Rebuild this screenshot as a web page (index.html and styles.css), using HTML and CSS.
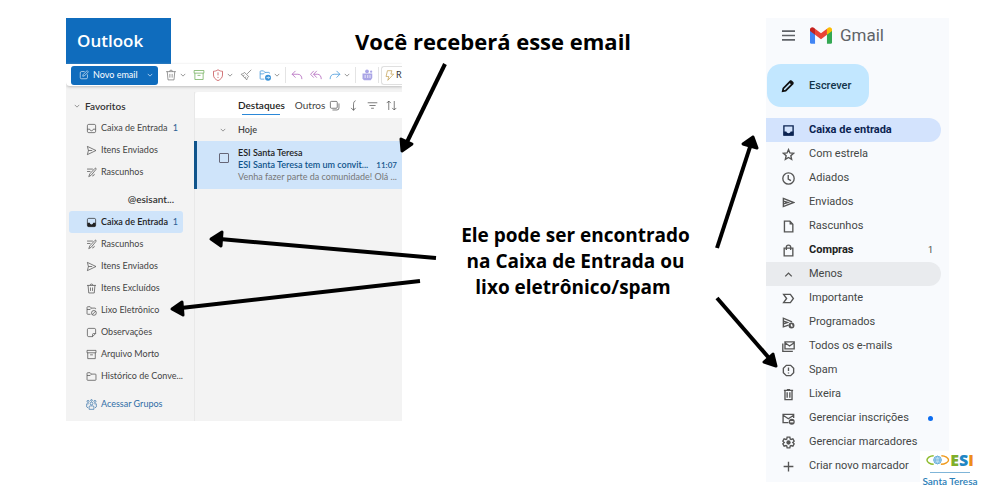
FILE: index.html
```html
<!DOCTYPE html>
<html lang="pt-BR">

<head>
    <title>Santa Teresa - convite por email</title>
    <meta charset="utf-8" />
    <link rel="stylesheet" href="styles.css">
</head>

<body>
    <svg class="sprite" aria-hidden="true">
        <symbol id="chev" viewBox="0 0 16 16"><path d="M2 5l6 6 6-6" /></symbol>
        <symbol id="compose" viewBox="0 0 16 16"><path d="M9 2.500H4A2 2 0 0 0 2 4.500V12a2 2 0 0 0 2 2h7.500a2 2 0 0 0 2-2V7M6 10l.5-2.500L13 1l2 2-6.500 6.500z" /></symbol>
        <symbol id="trash" viewBox="0 0 16 16"><path d="M1.500 3.500h13M6 3.500a2 2 0 0 1 4 0M3 3.500l1 11h8l1-11M6.500 6.500v5M9.500 6.500v5" /></symbol>
        <symbol id="archive" viewBox="0 0 16 16"><path d="M1.500 2h13v3.500h-13zM2.500 5.500V14h11V5.500M6 8.500h4" /></symbol>
        <symbol id="shield" viewBox="0 0 16 16"><path d="M8 1c2 1.500 4 2 6 2v5c0 3.500-2.500 6-6 7.500C4.500 14 2 11.500 2 8V3c2 0 4-.5 6-2zM8 4.500v4M8 10.500v1.500" /></symbol>
        <symbol id="broom" viewBox="0 0 16 16"><path d="M15 1L9.500 6.500M6 4.500l5.500 5.500M6 4.500C5 6 3.500 6.500 1.500 7L9 14.500c.5-2 1-3.500 2.500-4.500M4 9.500L6 8M6.500 12L8 10" /></symbol>
        <symbol id="move" viewBox="0 0 16 16"><path d="M7 13.500H2.500a1 1 0 0 1-1-1v-9a1 1 0 0 1 1-1H6L8 4.500h5a1 1 0 0 1 1 1V6M1.500 6.500H6l2-2" /><circle class="solid" cx="12" cy="11.500" r="4" /><path class="knock" d="M10 11.500h4M12.500 10l1.500 1.500-1.500 1.500" /></symbol>
        <symbol id="reply" viewBox="0 0 16 16"><path d="M6 2.500L1.500 7 6 11.500M1.500 7H9c3.500 0 5.500 2.500 5.500 6.500" /></symbol>
        <symbol id="replyall" viewBox="0 0 16 16"><path d="M5 2.500L.8 7 5 11.500M9 2.500L4.800 7 9 11.500M4.800 7H10c3 0 5 2.500 5 6.500" /></symbol>
        <symbol id="forward" viewBox="0 0 16 16"><path d="M10 2.500L14.500 7 10 11.500M14.500 7H7c-3.500 0-5.500 2.500-5.500 6.500" /></symbol>
        <symbol id="teams" viewBox="0 0 16 16"><circle class="solid" cx="8" cy="3" r="2.500" /><circle class="solid" cx="13.500" cy="3.500" r="1.500" /><path class="solid" d="M2 6h13v6l-2 3H4l-2-2z" /><path class="knock" d="M5.500 8v4M9 8v4M12 8v4" /></symbol>
        <symbol id="bolt" viewBox="0 0 16 16"><path d="M5 1h6.500L10 6h4L5.500 15 7 9.500H3z" /></symbol>
        <symbol id="tray" viewBox="0 0 16 16"><path d="M2 4a2 2 0 0 1 2-2h8a2 2 0 0 1 2 2v8a2 2 0 0 1-2 2H4a2 2 0 0 1-2-2zM2 9h3.500c.5 3 4.500 3 5 0H14" /></symbol>
        <symbol id="trayfull" viewBox="0 0 16 16"><path d="M2 4a2 2 0 0 1 2-2h8a2 2 0 0 1 2 2v8a2 2 0 0 1-2 2H4a2 2 0 0 1-2-2z" /><path class="solid" d="M2 8.500h3.500c.5 3 4.500 3 5 0H14V13l-1 1H3l-1-1z" /></symbol>
        <symbol id="send" viewBox="0 0 16 16"><path d="M2 2l12.500 6L2 14l1.500-6zM3.500 8H9" /></symbol>
        <symbol id="draft" viewBox="0 0 16 16"><path d="M1.500 3H10M1.500 6.500h5M4 14l1.500-4L13 2c1-1 2.500.5 1.500 1.500L7.500 12zM9 13c2 0 3-1 3-3" /></symbol>
        <symbol id="junk" viewBox="0 0 16 16"><path d="M6.500 13.500h-4a1 1 0 0 1-1-1v-9a1 1 0 0 1 1-1H6L8 4.500h5a1 1 0 0 1 1 1V6M1.500 6.500H6l2-2" /><circle cx="11.500" cy="11.500" r="3.500" /><path d="M9 14l5-5" /></symbol>
        <symbol id="note" viewBox="0 0 16 16"><path d="M4 2h8a2 2 0 0 1 2 2v5.500L9.500 14H4a2 2 0 0 1-2-2V4a2 2 0 0 1 2-2zM14 9.500h-3a1.500 1.500 0 0 0-1.500 1.500v3" /></symbol>
        <symbol id="folder" viewBox="0 0 16 16"><path d="M2.500 13.500a1 1 0 0 1-1-1v-9a1 1 0 0 1 1-1H6L8 4.500h5.500a1 1 0 0 1 1 1v7a1 1 0 0 1-1 1zM1.500 6.500H6l2-2" /></symbol>
        <symbol id="groups" viewBox="0 0 16 16"><circle cx="8" cy="6.500" r="2" /><circle cx="3" cy="3.500" r="1.500" /><circle cx="8" cy="2" r="1.200" /><circle cx="13" cy="3.500" r="1.500" /><path d="M4.500 15v-3.500a1.500 1.500 0 0 1 1.500-1.500h4a1.500 1.500 0 0 1 1.500 1.500V15zM4 7H1v4.500l2 1.500M12 7h3v4.500L13 13" /></symbol>
        <symbol id="copies" viewBox="0 0 16 16"><path d="M2 3.500A1.500 1.500 0 0 1 3.500 2h7A1.500 1.500 0 0 1 12 3.500v7a1.500 1.500 0 0 1-1.500 1.500h-7A1.500 1.500 0 0 1 2 10.500zM5 14.500h6.500a3 3 0 0 0 3-3V5" /></symbol>
        <symbol id="jump" viewBox="0 0 16 16"><path d="M11 1C8.500 2 8 4 8 7v8M4.500 11.500L8 15l3-3.500" /></symbol>
        <symbol id="filter" viewBox="0 0 16 16"><path d="M1 4h14M3.500 8h9M6 12h4" /></symbol>
        <symbol id="sort" viewBox="0 0 16 16"><path d="M4 14.500v-13M1 4.500l3-3 3 3M12 1.500v13M9 11.500l3 3 3-3" /></symbol>

        <symbol id="menu" viewBox="0 0 24 24"><path d="M0 4h24M0 12h24M0 20h24" /></symbol>
        <symbol id="pencil" viewBox="0 0 24 24"><path d="M3 21l1-5L16 4l4 4L8 20z" /><path class="solid" d="M14 6l4-4 4 4-4 4z" /></symbol>
        <symbol id="g-inbox" viewBox="0 0 24 24"><path d="M3.500 3.500h17v17h-17z" /><path class="solid" d="M3 14h5c1 4 7 4 8 0h5v7H3z" /></symbol>
        <symbol id="g-star" viewBox="0 0 24 24"><path d="M12 3l2.600 6.200 6.700.6-5 4.500 1.500 6.700-5.800-3.600L6.200 21l1.500-6.700-5-4.500 6.700-.6z" /></symbol>
        <symbol id="g-clock" viewBox="0 0 24 24"><circle cx="12" cy="12" r="10.500" /><path d="M11.500 5.500V13l5 3" /></symbol>
        <symbol id="g-send" viewBox="0 0 24 24"><path d="M2.500 4.500L21.500 12 2.500 19.500zM3 9.500l8 2.500-8 2.500" /></symbol>
        <symbol id="g-file" viewBox="0 0 24 24"><path d="M4.500 2h10l5.500 6v14H4.500z" /><path class="solid" d="M14 2v6.500h6z" /></symbol>
        <symbol id="g-bag" viewBox="0 0 24 24"><path d="M4 7.500h16V22H4zM8 11V6a4 4 0 0 1 8 0v5" /></symbol>
        <symbol id="g-up" viewBox="0 0 24 24"><path d="M6 15.500l6-6 6 6" /></symbol>
        <symbol id="g-label" viewBox="0 0 24 24"><path d="M3 4.500h12.500L21 12l-5.500 7.500H3L8.500 12z" /></symbol>
        <symbol id="g-timed" viewBox="0 0 24 24"><path d="M12 17L2.500 20V4l16 7M3 9.500l7 2.500-7 2.500" /><circle class="solid" cx="17.500" cy="17.500" r="5.500" /><path class="knock" d="M17.500 15v3l2 1" /></symbol>
        <symbol id="g-mails" viewBox="0 0 24 24"><path d="M5.500 3.500h17v13h-17zM5.500 5l8.500 6 8.500-6M1.500 6.500v14.500H20" /></symbol>
        <symbol id="g-spam" viewBox="0 0 24 24"><path d="M8 2.500h8L21.500 8v8L16 21.500H8L2.500 16V8zM12 6.500V13M12 15.500v2" /></symbol>
        <symbol id="g-trash" viewBox="0 0 24 24"><path d="M3.500 4.500h17M9 3h6M5.500 5v16.500h13V5M9.500 8v10M14.500 8v10" /></symbol>
        <symbol id="g-unsub" viewBox="0 0 24 24"><path d="M12 19.500H2v-15h19.500V11M2 6l9.700 6.500L21.500 6" /><circle class="solid" cx="18" cy="18" r="5.500" /><path class="knock" d="M15 18h6" /></symbol>
        <symbol id="g-gear" viewBox="0 0 24 24"><path d="M9.500 2h5l.7 3.500 1.500.9 3.400-1.200 2.400 4.300-2.700 2.500 2.700 2.500-2.400 4.300-3.400-1.200-1.500.9-.7 3.500h-5l-.7-3.500-1.500-.9-3.400 1.200-2.400-4.300L4.200 12 1.500 9.500l2.400-4.300 3.400 1.200 1.500-.9z" /><circle class="solid" cx="12" cy="12" r="4" /></symbol>
        <symbol id="g-plus" viewBox="0 0 24 24"><path d="M12 3v18M3 12h18" /></symbol>
    </svg>

    <main class="guide">
        <section class="outlook">
            <header class="brand">Outlook</header>

            <div class="toolbar">
                <button class="new"><svg><use href="#compose" /></svg>Novo email<svg class="chev"><use href="#chev" /></svg></button>
                <button aria-label="Excluir"><svg><use href="#trash" /></svg><svg class="chev"><use href="#chev" /></svg></button>
                <button class="green" aria-label="Arquivar"><svg><use href="#archive" /></svg></button>
                <button class="red" aria-label="Denunciar"><svg><use href="#shield" /></svg><svg class="chev"><use href="#chev" /></svg></button>
                <button aria-label="Limpar"><svg><use href="#broom" /></svg></button>
                <button class="blue" aria-label="Mover"><svg><use href="#move" /></svg><svg class="chev"><use href="#chev" /></svg></button>
                <span class="sep"></span>
                <button class="purple" aria-label="Responder"><svg><use href="#reply" /></svg></button>
                <button class="purple" aria-label="Responder a todos"><svg><use href="#replyall" /></svg></button>
                <button class="blue" aria-label="Encaminhar"><svg><use href="#forward" /></svg><svg class="chev"><use href="#chev" /></svg></button>
                <span class="sep"></span>
                <button class="lilac" aria-label="Teams"><svg><use href="#teams" /></svg></button>
                <span class="sep"></span>
                <button class="quick"><svg><use href="#bolt" /></svg>R</button>
            </div>

            <div class="panes">
                <nav class="folders">
                    <h2><svg class="chev"><use href="#chev" /></svg>Favoritos</h2>
                    <ul>
                        <li><a href="#"><svg><use href="#tray" /></svg>Caixa de Entrada<b>1</b></a></li>
                        <li><a href="#"><svg><use href="#send" /></svg>Itens Enviados</a></li>
                        <li><a href="#"><svg><use href="#draft" /></svg>Rascunhos</a></li>
                    </ul>
                    <h2 class="account">@esisant...</h2>
                    <ul>
                        <li><a href="#" class="current"><svg><use href="#trayfull" /></svg>Caixa de Entrada<b>1</b></a></li>
                        <li><a href="#"><svg><use href="#draft" /></svg>Rascunhos</a></li>
                        <li><a href="#"><svg><use href="#send" /></svg>Itens Enviados</a></li>
                        <li><a href="#"><svg><use href="#trash" /></svg>Itens Excluídos</a></li>
                        <li><a href="#"><svg><use href="#junk" /></svg>Lixo Eletrônico</a></li>
                        <li><a href="#"><svg><use href="#note" /></svg>Observações</a></li>
                        <li><a href="#"><svg><use href="#archive" /></svg>Arquivo Morto</a></li>
                        <li><a href="#"><svg><use href="#folder" /></svg>Histórico de Conve...</a></li>
                    </ul>
                    <a href="#" class="groups"><svg><use href="#groups" /></svg>Acessar Grupos</a>
                </nav>

                <div class="messages">
                    <div class="tabs">
                        <a href="#" class="active">Destaques</a>
                        <a href="#">Outros</a>
                        <div class="tools">
                            <button aria-label="Selecionar"><svg><use href="#copies" /></svg></button>
                            <button aria-label="Ir para"><svg><use href="#jump" /></svg></button>
                            <button aria-label="Filtrar"><svg><use href="#filter" /></svg></button>
                            <button aria-label="Classificar"><svg><use href="#sort" /></svg></button>
                        </div>
                    </div>
                    <h3><svg class="chev"><use href="#chev" /></svg>Hoje</h3>
                    <article class="message">
                        <input type="checkbox" aria-label="Selecionar mensagem">
                        <div class="summary">
                            <div class="from">ESI Santa Teresa</div>
                            <div class="subject"><span>ESI Santa Teresa tem um convit...</span><time>11:07</time></div>
                            <div class="preview">Venha fazer parte da comunidade! Olá ...</div>
                        </div>
                    </article>
                </div>
            </div>
        </section>

        <h1>Você receberá esse email</h1>
        <p class="where">Ele pode ser encontrado<br>na Caixa de Entrada ou<br>lixo eletrônico/spam&nbsp;</p>

        <section class="gmail">
            <header>
                <button aria-label="Menu"><svg class="burger"><use href="#menu" /></svg></button>
                <svg class="logo" viewBox="0 0 24 18">
                    <path fill="#4285f4" d="M0 3v13.500A1.500 1.500 0 0 0 1.500 18H5.500V7z" />
                    <path fill="#34a853" d="M24 3v13.500a1.500 1.500 0 0 1-1.500 1.500H18.500V7z" />
                    <path fill="#ea4335" d="M5.500 1.500L12 6.500l6.500-5v6.700L12 13.200 5.500 8.200z" />
                    <path fill="#c5221f" d="M0 4V2.500C0 .3 2.500-.8 4.300.6l1.200.9v6.700z" />
                    <path fill="#fbbc04" d="M24 4V2.500C24 .3 21.500-.8 19.700.6l-1.200.9v6.700z" />
                </svg>
                <span>Gmail</span>
            </header>
            <button class="write"><svg><use href="#pencil" /></svg>Escrever</button>
            <nav>
                <a href="#" class="current"><svg><use href="#g-inbox" /></svg>Caixa de entrada</a>
                <a href="#"><svg><use href="#g-star" /></svg>Com estrela</a>
                <a href="#"><svg><use href="#g-clock" /></svg>Adiados</a>
                <a href="#"><svg><use href="#g-send" /></svg>Enviados</a>
                <a href="#"><svg><use href="#g-file" /></svg>Rascunhos</a>
                <a href="#" class="unread"><svg><use href="#g-bag" /></svg>Compras<span>1</span></a>
                <a href="#" class="less"><svg><use href="#g-up" /></svg>Menos</a>
                <a href="#"><svg><use href="#g-label" /></svg>Importante</a>
                <a href="#"><svg><use href="#g-timed" /></svg>Programados</a>
                <a href="#"><svg><use href="#g-mails" /></svg>Todos os e-mails</a>
                <a href="#"><svg><use href="#g-spam" /></svg>Spam</a>
                <a href="#"><svg><use href="#g-trash" /></svg>Lixeira</a>
                <a href="#"><svg><use href="#g-unsub" /></svg>Gerenciar inscrições<i class="dot"></i></a>
                <a href="#"><svg><use href="#g-gear" /></svg>Gerenciar marcadores</a>
                <a href="#"><svg><use href="#g-plus" /></svg>Criar novo marcador</a>
            </nav>
            <div class="esi">
                <div class="mark">
                    <svg viewBox="0 0 25 12">
                        <path fill="none" stroke="#8dbb2c" stroke-width="1.500" d="M8 1.500C4 1.500 1 4 1 6s3 4.500 7 4.500" />
                        <path fill="none" stroke="#ef9a1d" stroke-width="1.500" d="M16 1.500c4 0 7.500 2.500 7.500 4.500s-3.500 4.500-8 4.500" />
                        <circle cx="12" cy="6" r="4" fill="#b9dcf0" stroke="#69afdb" />
                        <path fill="none" stroke="#69afdb" stroke-width=".7" d="M8 6h8M12 2c-3 2-3 6 0 8M12 2c3 2 3 6 0 8" />
                    </svg>
                    <b class="e">E</b><b class="s">S</b><b class="i">I</b>
                </div>
                <div class="name">Santa Teresa</div>
            </div>
        </section>
    </main>

    <!-- arrows from the notes to the mailboxes -->
    <svg class="arrows" viewBox="0 0 1000 500" aria-hidden="true">
        <path d="M445 64L407 142" />
        <path d="M436 258L220 239" />
        <path d="M420 281L181 308" />
        <path d="M717 248L750 147" />
        <path d="M717 298L769 358" />
        <path class="head" d="M402 151l-1-12 11 5z" />
        <path class="head" d="M211 239l11-7-1 14z" />
        <path class="head" d="M172 309l10-7 1 13z" />
        <path class="head" d="M753 137l-10 7 14 4z" />
        <path class="head" d="M776 366l-12-4 9-8z" />
    </svg>
</body>

</html>
```

FILE: styles.css
```css
* {
    box-sizing: border-box;
}

body {
    margin: 0;
    position: relative;
    background: #fff;
    font-family: "Open Sans", "Noto Sans", sans-serif;
}

h1, h2, h3, p, ul {
    margin: 0;
    padding: 0;
    list-style: none;
}

a {
    color: inherit;
    text-decoration: none;
}

button {
    border: 0;
    padding: 0;
    background: none;
    color: inherit;
    font: inherit;
    display: flex;
    align-items: center;
}

svg {
    flex: none;
    fill: none;
    stroke: currentColor;
    overflow: visible;
}

.sprite {
    display: none;
}

.solid {
    fill: currentColor;
    stroke: none;
}

.knock {
    stroke: #fff;
}

.guide {
    display: grid;
    grid-template-columns: 289px 47px 1fr 183px;
    grid-template-rows: 46px auto;
    padding: 18px 51px 19px 66px;
    align-items: start;
}

h1 {
    grid-area: 1 / 2 / 2 / 4;
    font-size: 22px;
    line-height: 46px;
    z-index: 1;
}

.where {
    grid-area: 2 / 3;
    padding: 158px 17px 0 0;
    font-size: 19px;
    font-weight: 700;
    line-height: 26px;
    text-align: center;
}

/* Outlook */
.outlook {
    grid-area: 1 / 1 / 3 / 3;
    overflow: hidden;
    color: #444;
    font-family: Lato, "Open Sans", sans-serif;
    font-size: 9px;
    line-height: 12px;
}

.outlook svg {
    width: 11px;
    height: 11px;
}

.outlook .chev {
    width: 6px;
    height: 6px;
    color: #777;
    stroke-width: 2;
}

.brand {
    width: 105px;
    padding-left: 11px;
    background: #0f6cbd;
    color: #fff;
    font-family: "Open Sans", sans-serif;
    font-size: 17px;
    font-weight: 600;
    line-height: 46px;
}

.toolbar {
    position: relative;
    display: flex;
    align-items: center;
    gap: 7px;
    height: 22px;
    padding-left: 5px;
    border-radius: 0 0 0 4px;
    background: #fff;
    box-shadow: 0 1px 3px #bbb;
}

.toolbar button {
    flex: none;
    gap: 3px;
    color: #777;
}

.toolbar svg {
    width: 12px;
    height: 12px;
}

.toolbar .new {
    width: 87px;
    height: 19px;
    padding: 0 5px 0 8px;
    gap: 4px;
    border-radius: 3px;
    background: #0f6cbd;
    color: #fff;
}

.toolbar .new svg {
    width: 10px;
    height: 10px;
}

.toolbar .chev,
.toolbar .new .chev {
    width: 6px;
    height: 6px;
}

.toolbar .new .chev {
    margin-left: auto;
    color: #cfe4fa;
}

.toolbar .green { color: #6fae58; }
.toolbar .red { color: #c4484e; }
.toolbar .blue { color: #3a92d8; }
.toolbar .purple { color: #ac5cb8; }
.toolbar .lilac { color: #aaa5e6; }

.sep {
    flex: none;
    width: 1px;
    height: 16px;
    margin: 0 -2px;
    background: #e4e4e4;
}

.toolbar .quick {
    height: 19px;
    gap: 1px;
    margin-left: -3px;
    padding-left: 2px;
    border: 1px solid #e0e0e0;
    border-right: 0;
    border-radius: 3px 0 0 3px;
    color: #333;
}

.toolbar .quick svg {
    width: 11px;
    height: 11px;
    color: #c19c4b;
}

.panes {
    display: grid;
    grid-template-columns: 128px 1fr;
    padding-top: 6px;
    background: #f3f3f3;
}

.folders {
    padding: 6px 11px 6px 3px;
}

.folders h2 {
    display: flex;
    align-items: center;
    gap: 5px;
    padding: 2px 5px 5px;
    color: #333;
    font-size: 10px;
    font-weight: 600;
}

.folders .account {
    padding: 10px 9px 6px 0;
    justify-content: flex-end;
}

.folders a {
    display: flex;
    align-items: center;
    gap: 4px;
    height: 22px;
    padding: 0 5px 0 17px;
    border-radius: 3px;
    white-space: nowrap;
}

.folders b {
    margin-left: auto;
    color: #2b5f92;
    font-weight: 400;
}

.folders .current {
    background: #cfe4fa;
    color: #222;
    font-weight: 600;
}

.folders .groups {
    margin-top: 6px;
    color: #2f6da6;
}

.messages {
    border-left: 1px solid #e8e8e8;
}

.tabs {
    display: flex;
    gap: 10px;
    padding: 0 8px 0 43px;
    background: #fff;
    font-size: 10px;
    line-height: 26px;
    border-radius: 3px 0 0 0;
}

.tabs .active {
    color: #222;
    font-weight: 600;
    background: linear-gradient(#2b88d8, #2b88d8) center 22px / 38px 1px no-repeat;
}

.tools {
    display: flex;
    gap: 8px;
    margin: 0 auto 0 -6px;
}

.messages h3 {
    display: flex;
    align-items: center;
    gap: 12px;
    height: 23px;
    padding-left: 25px;
    font-size: 9px;
    font-weight: 600;
}

.message {
    display: flex;
    padding: 6px 12px 6px 22px;
    border-left: 3px solid #0f548c;
    margin-left: -1px;
    background: #cfe4fa;
}

.message input {
    appearance: none;
    width: 10px;
    height: 10px;
    margin: 6px 9px 0 0;
    border: 1px solid #667;
    border-radius: 1px;
}

.summary {
    flex: 1;
    white-space: nowrap;
}

.from {
    color: #222;
    font-weight: 600;
}

.subject {
    display: flex;
    justify-content: space-between;
    color: #0f548c;
    font-weight: 600;
}

.subject time {
    font-size: 8px;
}

.preview {
    color: #777;
}

/* Gmail */
.gmail {
    grid-area: 1 / 4 / 3 / 5;
    position: relative;
    padding-bottom: 4px;
    background: #f8fafd;
    color: #444746;
    font: 11px/24px Roboto, sans-serif;
}

.gmail header {
    display: flex;
    align-items: center;
    height: 34px;
    padding-left: 16px;
    color: #5f6368;
    font-size: 17px;
}

.burger {
    width: 13px;
    height: 13px;
    stroke-width: 3;
}

.logo {
    width: 22px;
    height: 17px;
    margin: 0 8px 0 15px;
    stroke: none;
}

.write {
    width: 102px;
    height: 43px;
    margin: 12px 0 11px 1px;
    padding-left: 14px;
    gap: 14px;
    border-radius: 14px;
    background: #c2e7ff;
    color: #12354a;
    font-weight: 500;
}

.write svg {
    width: 14px;
    height: 14px;
    color: #111;
    stroke-width: 3;
}

.gmail nav a {
    display: flex;
    align-items: center;
    gap: 14px;
    margin-right: 8px;
    padding: 0 8px 0 16px;
    border-radius: 0 12px 12px 0;
}

.gmail nav svg {
    width: 13px;
    height: 13px;
    color: #555;
    stroke-width: 2.5;
}

.gmail nav .current,
.gmail nav .current svg {
    color: #0b2351;
}

.gmail nav .current {
    background: #d3e3fd;
    font-weight: 700;
}

.gmail nav .unread {
    font-weight: 700;
    color: #222;
}

.unread span {
    margin-left: auto;
    color: #444746;
    font-size: 9px;
    font-weight: 400;
}

.gmail nav .less {
    background: #e9ebee;
}

.dot {
    width: 5px;
    height: 5px;
    margin-left: auto;
    border-radius: 50%;
    background: #0b6cf0;
}

.esi {
    position: absolute;
    right: -31px;
    bottom: -5px;
    width: 60px;
    padding: 1px 2px 0;
    background: #fff;
    font-family: Lato, sans-serif;
}

.mark {
    display: flex;
    justify-content: center;
    align-items: center;
    padding-bottom: 4px;
    border-bottom: 1px solid #7fb5d8;
    margin: 0 8px 2px;
    font-size: 16px;
    line-height: 16px;
}

.mark svg {
    width: 24px;
    height: 12px;
    stroke: none;
}

.mark b {
    font-family: "Open Sans", sans-serif;
    font-weight: 800;
}

.e { color: #7fae2a; }
.s { color: #1f87c4; }
.i { color: #ee8c1a; }

.name {
    color: #2c80b8;
    font-size: 10px;
    font-weight: 600;
    line-height: 12px;
    text-align: center;
    white-space: nowrap;
}

.arrows {
    position: absolute;
    top: 0;
    left: 0;
    width: 1000px;
    height: 500px;
    z-index: 2;
    color: #000;
    stroke-width: 4;
    pointer-events: none;
}

.head {
    fill: #000;
    stroke-width: 3;
    stroke-linejoin: round;
}
```
